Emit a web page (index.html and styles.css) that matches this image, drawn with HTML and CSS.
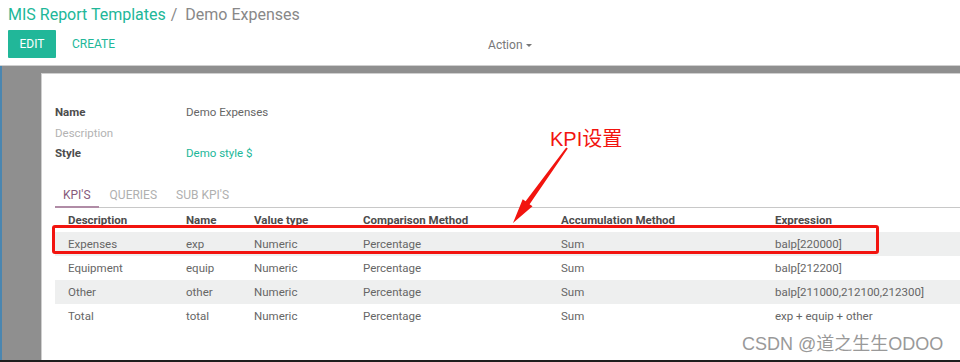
FILE: index.html
```html
<!DOCTYPE html>
<html lang="en">
<head>
    <meta charset="UTF-8">
    <meta name="viewport" content="width=device-width, initial-scale=1.0">
    <title>Demo Expenses</title>
    <link rel="stylesheet" href="styles.css">
</head>
<body>
    <div class="page">
        <div class="control-panel">
            <div class="breadcrumb">
                <a href="#">MIS Report Templates</a>
                <span class="sep">/</span>
                <span class="current">Demo Expenses</span>
            </div>
            <div class="buttons">
                <button class="btn-primary">EDIT</button>
                <button class="btn-link">CREATE</button>
                <div class="action">Action <span class="caret"></span></div>
            </div>
        </div>

        <div class="content">
            <div class="sheet">
                <div class="fields">
                    <div class="field">
                        <span class="label">Name</span>
                        <span class="value">Demo Expenses</span>
                    </div>
                    <div class="field">
                        <span class="label muted">Description</span>
                        <span class="value"></span>
                    </div>
                    <div class="field">
                        <span class="label">Style</span>
                        <a class="value link" href="#">Demo style $</a>
                    </div>
                </div>

                <div class="tabs">
                    <span class="tab active">KPI'S</span>
                    <span class="tab">QUERIES</span>
                    <span class="tab">SUB KPI'S</span>
                </div>

                <table class="kpis">
                    <colgroup>
                        <col style="width: 131px">
                        <col style="width: 68px">
                        <col style="width: 109px">
                        <col style="width: 198px">
                        <col style="width: 214px">
                        <col>
                    </colgroup>
                    <thead>
                        <tr>
                            <th>Description</th>
                            <th>Name</th>
                            <th>Value type</th>
                            <th>Comparison Method</th>
                            <th>Accumulation Method</th>
                            <th>Expression</th>
                        </tr>
                    </thead>
                    <tbody>
                        <tr>
                            <td>Expenses</td>
                            <td>exp</td>
                            <td>Numeric</td>
                            <td>Percentage</td>
                            <td>Sum</td>
                            <td>balp[220000]</td>
                        </tr>
                        <tr>
                            <td>Equipment</td>
                            <td>equip</td>
                            <td>Numeric</td>
                            <td>Percentage</td>
                            <td>Sum</td>
                            <td>balp[212200]</td>
                        </tr>
                        <tr>
                            <td>Other</td>
                            <td>other</td>
                            <td>Numeric</td>
                            <td>Percentage</td>
                            <td>Sum</td>
                            <td>balp[211000,212100,212300]</td>
                        </tr>
                        <tr>
                            <td>Total</td>
                            <td>total</td>
                            <td>Numeric</td>
                            <td>Percentage</td>
                            <td>Sum</td>
                            <td>exp + equip + other</td>
                        </tr>
                    </tbody>
                </table>
            </div>
        </div>
    </div>

    <!-- annotation layer drawn over the screenshot -->
    <div class="note">KPI设置</div>
    <svg class="arrow" width="960" height="362" viewBox="0 0 960 362">
        <polygon fill="#f2140f" points="566.2,147.4 525.6,201.2 522.7,199.2 513,223 532.5,206.2 529.6,204.2 567.8,148.6"/>
    </svg>
    <div class="highlight"></div>
    <div class="watermark">CSDN @道之生生ODOO</div>
</body>
</html>
```

FILE: styles.css
```css
body {
    margin: 0;
    padding: 0;
    font-family: Roboto, 'Noto Sans', sans-serif;
    color: #666666;
    background: #ffffff;
    overflow: hidden;
}

.page {
    height: 360px;
    display: flex;
    flex-direction: column;
    border-bottom: 2px solid #1e1e1e;
    overflow: hidden;
}

.control-panel {
    height: 66px;
    padding: 0 8px;
    box-sizing: border-box;
    border-bottom: 1px solid #cfcfcf;
}

.breadcrumb {
    font-size: 16px;
    height: 29px;
    line-height: 29px;
    white-space: nowrap;
}

.breadcrumb a {
    color: #21b799;
    text-decoration: none;
}

.breadcrumb .sep {
    color: #888888;
    margin: 0 4px 0 1px;
}

.breadcrumb .current {
    color: #888888;
}

.buttons {
    display: flex;
    align-items: center;
    height: 29px;
}

.buttons button {
    font-family: Roboto, sans-serif;
    font-size: 12px;
    border: none;
    cursor: pointer;
}

.btn-primary {
    width: 48px;
    height: 28px;
    background: #21b799;
    color: #ffffff;
    border-radius: 1px;
}

.btn-link {
    background: none;
    color: #21b799;
    margin-left: 8px;
    padding: 0 8px;
}

.action {
    margin-left: 365px;
    font-size: 12px;
    color: #777777;
    padding-top: 2px;
}

.caret {
    display: inline-block;
    width: 0;
    height: 0;
    border-left: 3px solid transparent;
    border-right: 3px solid transparent;
    border-top: 3px solid #777777;
    vertical-align: middle;
    margin-left: 1px;
}

.content {
    flex: 1;
    background: #8f8f8f;
    border-left: 2px solid #4a86b0;
    padding: 7px 0 0 39px;
    overflow: hidden;
}

.sheet {
    background: #ffffff;
    border-top: 1px solid #cfcfcf;
    border-left: 1px solid #cfcfcf;
    height: 100%;
    padding: 28px 0 0 13px;
    box-sizing: border-box;
    width: 940px;
}

.fields {
    font-size: 11.5px;
}

.field {
    display: flex;
    height: 20.5px;
    line-height: 21px;
}

.field .label {
    width: 131px;
    font-weight: bold;
    color: #4c4c4c;
}

.field .label.muted {
    font-weight: normal;
    color: #b3b3b3;
}

.field .link {
    color: #21b799;
    text-decoration: none;
}

.tabs {
    display: flex;
    margin-top: 20px;
    border-bottom: 1px solid #c8c8c8;
    font-size: 12px;
    height: 23px;
}

.tab {
    padding: 0 8px;
    margin-right: 3px;
    line-height: 23px;
    color: #b0b0b0;
}

.tab.active {
    color: #875a7b;
    border-bottom: 2px solid #b08ca6;
    height: 22px;
}

.kpis {
    width: 905px;
    border-collapse: collapse;
    table-layout: fixed;
    font-size: 11.5px;
}

.kpis th,
.kpis td {
    text-align: left;
    padding: 0;
    height: 24px;
    line-height: 24px;
    white-space: nowrap;
}

.kpis thead th {
    color: #4c4c4c;
    font-weight: bold;
}

.kpis td {
    color: #666666;
}

.kpis th:first-child,
.kpis td:first-child {
    padding-left: 13px;
}

.kpis tbody tr:nth-child(odd) {
    background: #eeefef;
}

.note {
    position: absolute;
    left: 550px;
    top: 123px;
    font-family: 'Liberation Sans', 'Noto Sans CJK SC', sans-serif;
    font-size: 20px;
    color: #f2140f;
}

.arrow {
    position: absolute;
    left: 0;
    top: 0;
}

.highlight {
    position: absolute;
    left: 52px;
    top: 225px;
    width: 821px;
    height: 23px;
    border: 3px solid #f2140f;
    border-radius: 3px;
}

.watermark {
    position: absolute;
    left: 742px;
    top: 329px;
    font-family: 'Liberation Sans', 'Noto Sans CJK SC', sans-serif;
    font-size: 18px;
    color: #999999;
}
```
